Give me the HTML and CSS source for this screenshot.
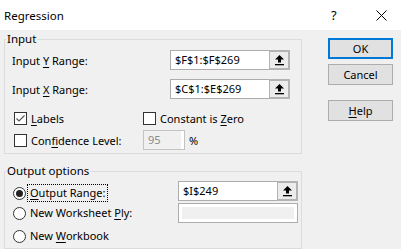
FILE: index.html
```html
<!DOCTYPE html>
<html lang="en">
<head>
    <meta charset="UTF-8">
    <meta name="viewport" content="width=device-width, initial-scale=1.0">
    <title>Regression</title>
    <link rel="stylesheet" href="styles.css">
</head>
<body>
    <div class="titlebar">
        <span class="title">Regression</span>
        <span class="title-help">?</span>
        <span class="title-close">
            <svg width="11" height="11" viewBox="0 0 11 11"><path d="M0.5 0.5L10.5 10.5M10.5 0.5L0.5 10.5" stroke="#000" stroke-width="1"/></svg>
        </span>
    </div>

    <div class="dialog">
        <div class="groups">
            <fieldset class="group group-input">
                <legend>Input</legend>
                <div class="row range-row first">
                    <span class="label">Input <u>Y</u> Range:</span>
                    <div class="refedit">
                        <span class="refedit-text">$F$1:$F$269</span>
                        <span class="picker">
                            <svg width="9" height="11" viewBox="0 0 9 11"><path d="M4.5 0L9 4.5H6V7.5H3V4.5H0Z" fill="#000"/><rect y="9" width="9" height="1.3" fill="#000"/></svg>
                        </span>
                    </div>
                </div>
                <div class="row range-row">
                    <span class="label">Input <u>X</u> Range:</span>
                    <div class="refedit">
                        <span class="refedit-text">$C$1:$E$269</span>
                        <span class="picker">
                            <svg width="9" height="11" viewBox="0 0 9 11"><path d="M4.5 0L9 4.5H6V7.5H3V4.5H0Z" fill="#000"/><rect y="9" width="9" height="1.3" fill="#000"/></svg>
                        </span>
                    </div>
                </div>
                <div class="row check-row">
                    <div class="check-item first-col">
                        <span class="check">
                            <svg width="11" height="11" viewBox="0 0 11 11"><path d="M1.5 5.5L4 8L9.5 2.5" fill="none" stroke="#555" stroke-width="1.2"/></svg>
                        </span>
                        <span><u>L</u>abels</span>
                    </div>
                    <div class="check-item">
                        <span class="check"></span>
                        <span>Constant is <u>Z</u>ero</span>
                    </div>
                </div>
                <div class="row conf-row">
                    <div class="check-item first-col">
                        <span class="check"></span>
                        <span>Con<u>f</u>idence Level:</span>
                    </div>
                    <span class="disabled-box conf-box">95</span>
                    <span class="percent">%</span>
                </div>
            </fieldset>

            <fieldset class="group group-output">
                <legend>Output options</legend>
                <div class="output-body">
                    <div class="radios">
                        <div class="radio-item">
                            <span class="radio selected"></span>
                            <span class="radio-label focused"><u>O</u>utput Range:</span>
                        </div>
                        <div class="radio-item">
                            <span class="radio"></span>
                            <span class="radio-label">New Worksheet <u>P</u>ly:</span>
                        </div>
                        <div class="radio-item last">
                            <span class="radio"></span>
                            <span class="radio-label">New <u>W</u>orkbook</span>
                        </div>
                    </div>
                    <div class="fields">
                        <div class="refedit">
                            <span class="refedit-text">$I$249</span>
                            <span class="picker">
                                <svg width="9" height="11" viewBox="0 0 9 11"><path d="M4.5 0L9 4.5H6V7.5H3V4.5H0Z" fill="#000"/><rect y="9" width="9" height="1.3" fill="#000"/></svg>
                            </span>
                        </div>
                        <span class="disabled-box ply-box"></span>
                    </div>
                </div>
            </fieldset>
        </div>

        <div class="buttons">
            <button class="btn btn-default">OK</button>
            <button class="btn">Cancel</button>
            <button class="btn btn-help"><u>H</u>elp</button>
        </div>
    </div>
</body>
</html>
```

FILE: styles.css
```css
/* General Styles */
body {
    margin: 0;
    width: 401px;
    height: 249px;
    overflow: hidden;
    font-family: "Noto Sans", sans-serif;
    font-size: 11px;
    color: #000;
    background-color: #f0f0f0;
}

u {
    text-decoration-thickness: 1px;
    text-underline-offset: 2px;
}

/* Title bar */
.titlebar {
    height: 30px;
    background: #fff;
    display: flex;
    align-items: center;
    padding-left: 4px;
}

.title {
    font-size: 11.5px;
    flex: 1;
}

.title-help {
    font-size: 13px;
    width: 12px;
    margin-right: 33px;
}

.title-close {
    display: flex;
    width: 11px;
    margin-right: 14px;
}

/* Dialog body */
.dialog {
    display: flex;
    height: 219px;
    overflow: hidden;
}

.groups {
    width: 298px;
    padding: 1px 0 0 4px;
}

.group {
    margin: 0;
    padding: 0;
    border: 1px solid #dcdcdc;
    min-width: 0;
}

.group legend {
    font-size: 11.5px;
    line-height: 16px;
    padding: 0 1px;
    margin-left: 1px;
}

.group-input {
    padding-bottom: 3px;
}

.group-output {
    margin-top: 9px;
    padding-bottom: 2px;
}

.row {
    display: flex;
    align-items: center;
    height: 20px;
}

.range-row {
    padding-left: 7px;
    margin-top: 9px;
}

.range-row.first {
    margin-top: 3px;
}

.range-row .label {
    width: 158px;
}

/* Reference edit boxes */
.refedit {
    display: flex;
    width: 120px;
    height: 20px;
    box-sizing: border-box;
    background: #fff;
    border: 1px solid #adadad;
}

.refedit-text {
    flex: 1;
    padding-left: 4px;
    line-height: 18px;
}

.picker {
    width: 21px;
    margin: -1px -1px -1px 0;
    box-sizing: border-box;
    border: 2px solid #b4b4b4;
    border-left-width: 1px;
    background: #ececec;
    display: flex;
    align-items: center;
    justify-content: center;
}

/* Checkboxes */
.check-row {
    margin-top: 9px;
    padding-left: 9px;
}

.conf-row {
    margin-top: 2px;
    padding-left: 9px;
}

.check-item {
    display: flex;
    align-items: center;
}

.first-col {
    width: 129px;
}

.check {
    width: 13px;
    height: 13px;
    box-sizing: border-box;
    border: 1px solid #333;
    background: #fff;
    margin-right: 4px;
    display: flex;
    align-items: center;
    justify-content: center;
}

.disabled-box {
    display: block;
    box-sizing: border-box;
    height: 20px;
    border: 1px solid #c3c3c3;
    background: #f0f0f0;
    box-shadow: inset 0 0 0 2px #fff;
}

.conf-box {
    width: 42px;
    padding-left: 4px;
    line-height: 18px;
    color: #8a8a8a;
    box-shadow: inset -3px 0 0 #fff;
}

.percent {
    margin-left: 4px;
}

/* Radios */
.output-body {
    display: flex;
}

.radios {
    width: 165px;
    padding-left: 8px;
    padding-top: 4px;
}

.radio-item {
    display: flex;
    align-items: center;
    height: 20px;
}

.radio-item.last {
    margin-top: 3px;
}

.radio {
    width: 13px;
    height: 13px;
    box-sizing: border-box;
    border: 1px solid #333;
    border-radius: 50%;
    background: #fff;
    margin-right: 1px;
    display: flex;
    align-items: center;
    justify-content: center;
}

.radio.selected::after {
    content: "";
    width: 7px;
    height: 7px;
    border-radius: 50%;
    background: #222;
}

.radio-label {
    border: 1px dotted transparent;
    padding: 0 2px;
    line-height: 16px;
}

.radio-label.focused {
    border-color: #000;
}

.fields {
    padding-top: 2px;
    display: flex;
    flex-direction: column;
    gap: 2px;
}

.ply-box {
    width: 120px;
    border-color: #adadad;
    box-shadow: inset 0 0 0 3px #fff;
}

/* Buttons */
.buttons {
    display: flex;
    flex-direction: column;
    margin-left: 26px;
    padding-top: 8px;
}

.btn {
    width: 65px;
    height: 21px;
    margin: 0 0 5px 0;
    padding: 0;
    box-sizing: border-box;
    font-family: "Noto Sans", sans-serif;
    font-size: 11px;
    color: #000;
    background: #e1e1e1;
    border: 1px solid #adadad;
}

.btn-default {
    border: 2px solid #0078d7;
}

.btn-help {
    margin-top: 10px;
}
```
